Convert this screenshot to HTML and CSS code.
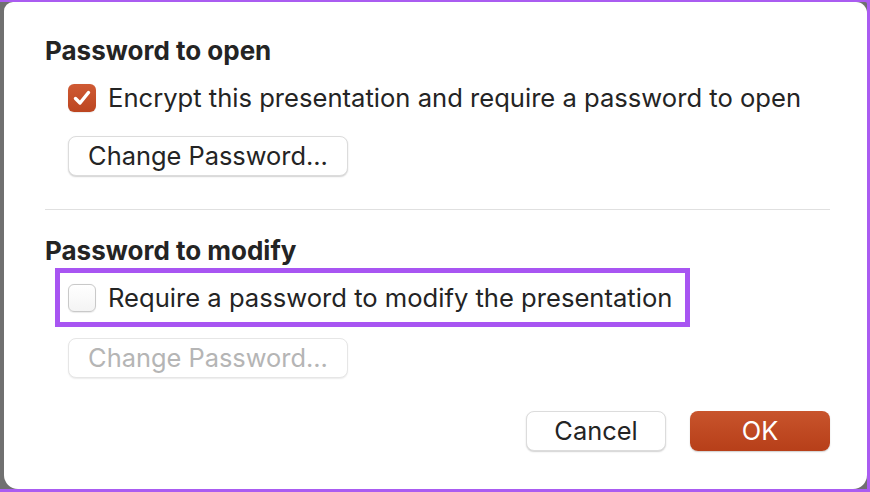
FILE: index.html
```html
<!DOCTYPE html>
<html>
<head>
<meta charset="utf-8">
<link rel="stylesheet" href="styles.css">
</head>
<body>
<div class="frame">
  <div class="backdrop">
    <div class="dialog">
      <div class="heading">Password to open</div>
      <div class="row first-row">
        <span class="check checked">
          <svg viewBox="0 0 28 28" width="28" height="28"><path d="M7.5 14.5 L12 19 L20.5 8.5" fill="none" stroke="#fff" stroke-width="3.4" stroke-linecap="round" stroke-linejoin="round"/></svg>
        </span>
        <span class="label">Encrypt this presentation and require a password to open</span>
      </div>
      <button class="btn wide first-btn">Change Password...</button>
      <div class="sep"></div>
      <div class="heading second-heading">Password to modify</div>
      <div class="highlight">
        <div class="row">
          <span class="check"></span>
          <span class="label">Require a password to modify the presentation</span>
        </div>
      </div>
      <button class="btn wide disabled">Change Password...</button>
      <div class="footer">
        <button class="btn small">Cancel</button>
        <button class="btn small primary">OK</button>
      </div>
    </div>
  </div>
</div>
</body>
</html>
```

FILE: styles.css
```css
html, body {
  margin: 0;
  padding: 0;
}
body {
  width: 870px;
  height: 492px;
  overflow: hidden;
  font-family: Inter, "Liberation Sans", Arial, sans-serif;
}
.frame {
  box-sizing: border-box;
  width: 870px;
  height: 492px;
  background: #aa5cf1;
  padding: 2px 3px 3px 0;
}
.backdrop {
  height: 100%;
  background: #707070;
  padding-left: 4px;
  border-top-right-radius: 2px;
}
.dialog {
  box-sizing: border-box;
  height: 100%;
  background: #fff;
  border-radius: 9px 11px 14px 14px;
  padding: 35px 37px 0 41px;
  color: #242424;
  display: flex;
  flex-direction: column;
  align-items: flex-start;
}
.heading {
  font-size: 26px;
  font-weight: 700;
  line-height: 28px;
  height: 28px;
  white-space: nowrap;
}
.row {
  display: flex;
  align-items: center;
  gap: 12px;
  height: 28px;
}
.first-row {
  margin-top: 19px;
  margin-left: 23px;
}
.label {
  font-size: 25.6px;
  line-height: 28px;
  white-space: nowrap;
}
.check {
  box-sizing: border-box;
  width: 28px;
  height: 28px;
  border-radius: 6px;
  border: 1px solid #c9c9c9;
  background: linear-gradient(#ffffff, #f4f4f4);
  box-shadow: 0 0.5px 1px rgba(0,0,0,0.08);
  display: block;
  flex: none;
}
.check.checked {
  border: none;
  background: linear-gradient(#cf5a33, #bc4520);
}
.check svg {
  display: block;
}
.btn {
  box-sizing: border-box;
  font-family: inherit;
  font-size: 25.4px;
  color: #242424;
  background: #fff;
  border: 1px solid #dcdcdc;
  border-radius: 8px;
  box-shadow: 0 1px 1.5px rgba(0,0,0,0.18);
  height: 40px;
  padding: 0;
  line-height: 38px;
  white-space: nowrap;
}
.btn.wide {
  width: 280px;
  margin-left: 23px;
}
.first-btn {
  margin-top: 24px;
}
.btn.disabled {
  color: #b5b5b5;
  border-color: #e6e6e6;
  box-shadow: 0 1px 1.5px rgba(0,0,0,0.08);
  margin-top: 11px;
}
.sep {
  align-self: stretch;
  height: 1px;
  background: #e0e0e0;
  margin-top: 33px;
}
.second-heading {
  margin-top: 27px;
}
.highlight {
  box-sizing: border-box;
  width: 635px;
  height: 59px;
  margin-top: 3px;
  margin-left: 10px;
  border: 5px solid #a855f2;
  padding: 11px 0 0 8px;
}
.footer {
  align-self: stretch;
  display: flex;
  justify-content: flex-end;
  gap: 24px;
  margin-top: 33px;
}
.btn.small {
  width: 140px;
}
.btn.primary {
  color: #fff;
  border: none;
  background: linear-gradient(#c8542c, #b73f19);
  box-shadow: 0 1px 1.5px rgba(0,0,0,0.2);
}
```
